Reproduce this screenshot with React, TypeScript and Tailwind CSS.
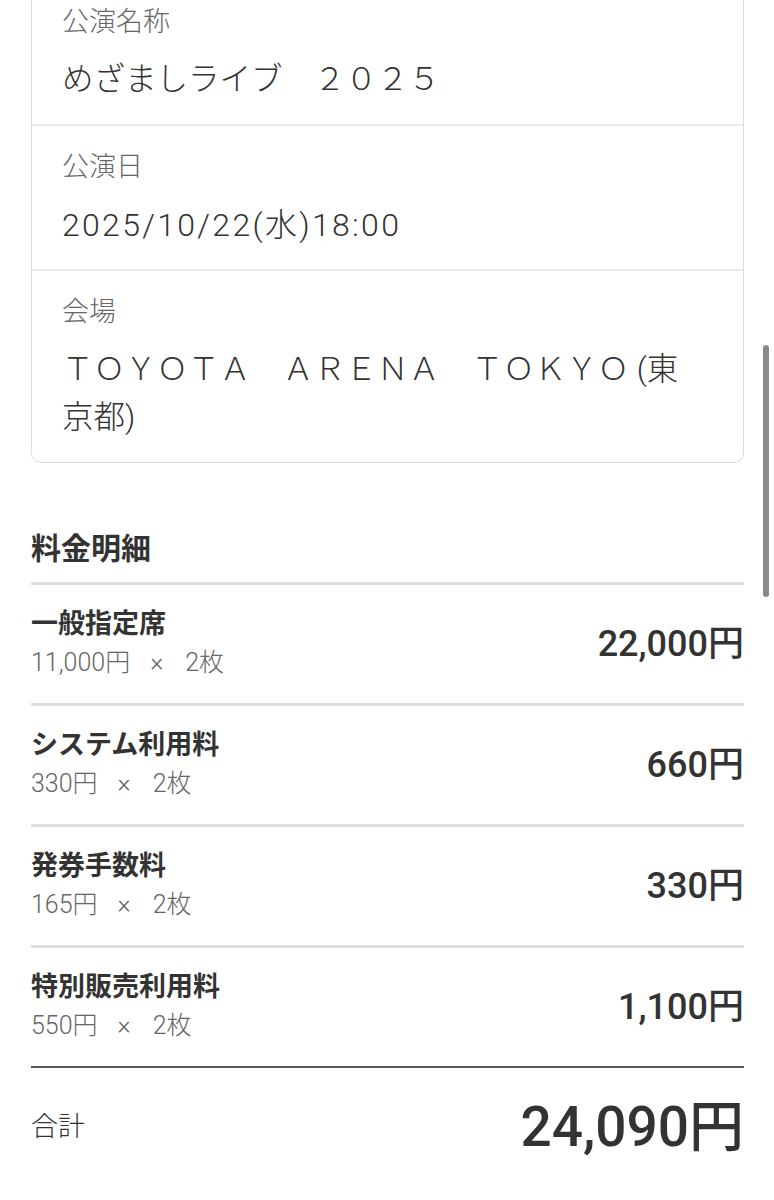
const font = { fontFamily: 'Roboto, "Noto Sans CJK JP", sans-serif' }

const info = [
    { label: "公演名称", value: "めざましライブ　２０２５", cls: "text-[31.5px]" },
    { label: "公演日", value: "2025/10/22(水)18:00", cls: "text-[32px] tracking-[2.3px]" },
    { label: "会場", value: "ＴＯＹＯＴＡ　ＡＲＥＮＡ　ＴＯＫＹＯ (東京都)", cls: "text-[31.5px]" },
]

const fees = [
    { name: "一般指定席", unit: "11,000円", total: "22,000円" },
    { name: "システム利用料", unit: "330円", total: "660円" },
    { name: "発券手数料", unit: "165円", total: "330円" },
    { name: "特別販売利用料", unit: "550円", total: "1,100円" },
]

const App = () => {
    return (
        <div className="relative bg-white min-h-[1200px] overflow-hidden text-[#333]" style={font}>
            <div className="pl-[31px] pr-[30px] -mt-[20px]">
                <div className="border border-[#dcdcdc] rounded-[10px]">
                    {info.map((row, i) => (
                        <div
                            key={row.label}
                            className={`pl-[30px] pr-[36px] pt-[22px] pb-[20px] ${i > 0 ? "border-t-2 border-[#ececec]" : ""}`}
                        >
                            <p className="text-[27px] leading-[38px] text-[#666] font-light">{row.label}</p>
                            <p className={`mt-[15px] leading-[48px] text-[#333] font-light ${row.cls}`}>{row.value}</p>
                        </div>
                    ))}
                </div>

                <h2 className="mt-[66px] mb-[13px] text-[30px] leading-[40px] font-bold text-[#333]">料金明細</h2>

                <div className="border-t-[3px] border-[#dedede]">
                    {fees.map((fee, i) => (
                        <div
                            key={fee.name}
                            className={`flex items-center justify-between pt-[21px] pb-[22px] ${i < fees.length - 1 ? "border-b-[3px] border-[#dedede]" : ""}`}
                        >
                            <div>
                                <p className="text-[27px] leading-[36px] font-bold text-[#333]">{fee.name}</p>
                                <p className="mt-[3px] text-[25px] leading-[36px] text-[#666] font-light">
                                    {fee.unit}
                                    <span className="ml-[20px] mr-[22px]">×</span>
                                    2枚
                                </p>
                            </div>
                            <p className="text-[36px] leading-[44px] font-medium text-[#333]">{fee.total}</p>
                        </div>
                    ))}
                </div>

                <div className="border-t-2 border-[#555] flex items-center justify-between pt-[28px] pb-[30px]">
                    <p className="text-[27px] leading-[40px] text-[#333] font-light">合計</p>
                    <p className="text-[55px] leading-[62px] font-medium text-[#333]">24,090円</p>
                </div>
            </div>

            <div className="absolute left-[763px] top-[345px] w-[6px] h-[252px] rounded-full bg-[#8a8a8a]" />
        </div>
    )
}

export default App
